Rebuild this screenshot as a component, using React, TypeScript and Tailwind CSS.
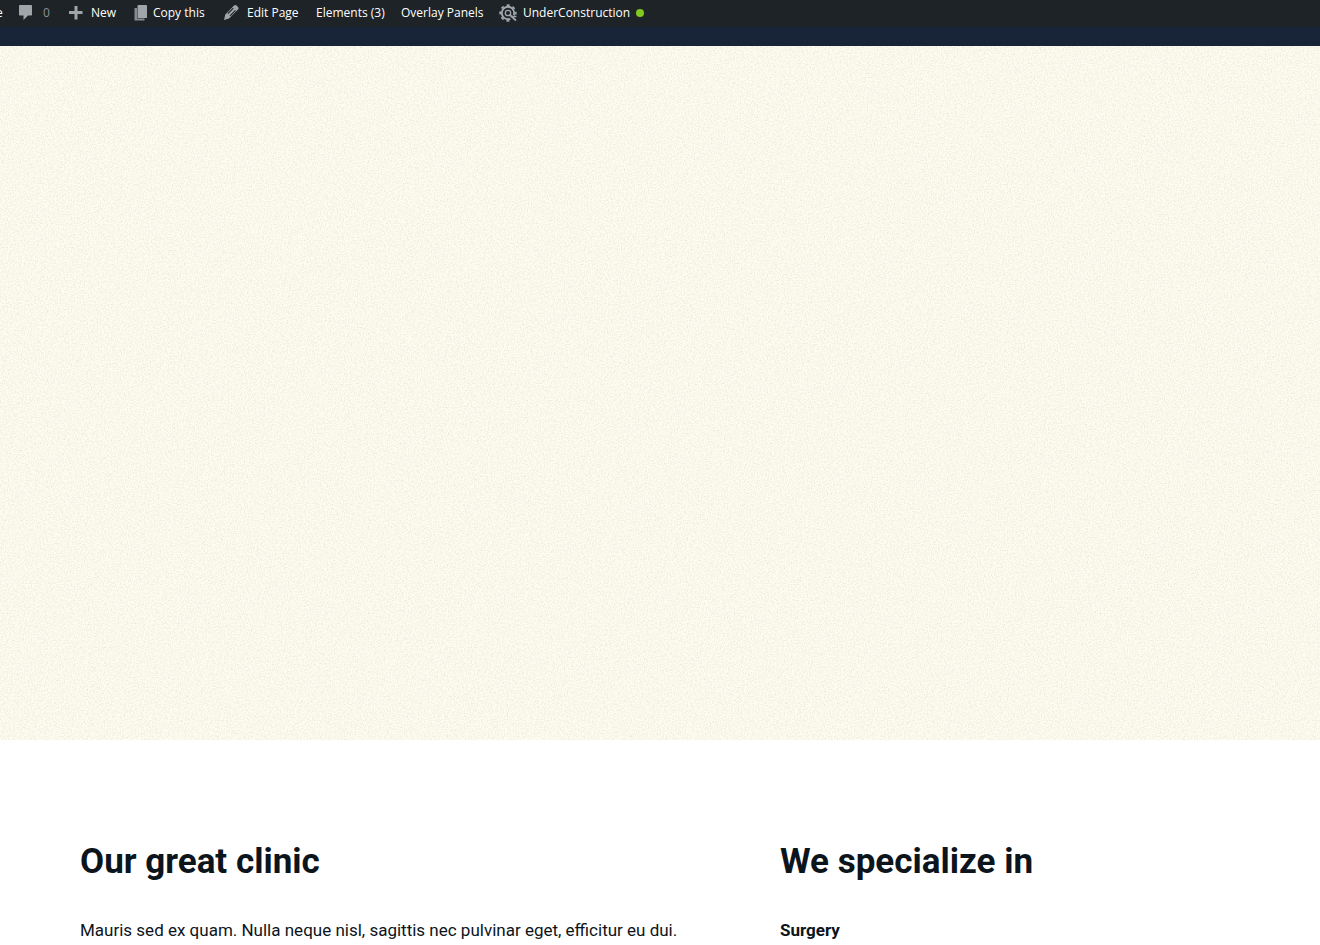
import type { ReactNode } from "react"

type BarItem = {
  label: string
  icon?: ReactNode
  className: string
  muted?: boolean
  active?: boolean
}

function CommentIcon() {
  return (
    <svg viewBox="0 0 20 20" className="size-5 fill-current" aria-hidden="true">
      <path d="M4 2h11c.6 0 1 .4 1 1v8.500c0 .6-.4 1-1 1h-3L7.500 17v-4.500H4c-.6 0-1-.4-1-1V3c0-.6.4-1 1-1z" />
    </svg>
  )
}

function PlusIcon() {
  return (
    <svg viewBox="0 0 20 20" className="size-5 fill-current" aria-hidden="true">
      <path d="M15.500 8v3H10.500v5.500H7.500V11H2V8h5.500V3h3v5z" />
    </svg>
  )
}

function CopyIcon() {
  return (
    <svg viewBox="0 0 20 20" className="size-5 fill-current" aria-hidden="true">
      <path d="M3.500 5H6v10.500h7.500V17.500h-10z" fill="#858b90" />
      <path d="M7.500 2H15a1 1 0 0 1 1 1v12H6.500V3a1 1 0 0 1 1-1z" />
    </svg>
  )
}

function PencilIcon() {
  return (
    <svg viewBox="0 0 20 20" className="size-5 fill-current" aria-hidden="true">
      <path d="M12 2.500c.8-.8 1.800-.8 2.600 0l1.400 1.400c.8.8.8 1.800 0 2.600L7 15.500l-5 1.500 1.300-5.500z" />
      <path d="M5.800 10.700l5.500-5.500M8 12.900l5.500-5.500" stroke="#1d2327" strokeWidth="1.200" fill="none" />
    </svg>
  )
}

function GearSearchIcon() {
  return (
    <svg viewBox="0 0 20 20" className="size-5 fill-none stroke-current" aria-hidden="true">
      <circle cx="10" cy="10" r="6.200" strokeWidth="1.900" />
      <circle cx="10" cy="10" r="7.800" strokeWidth="1.800" strokeDasharray="3.060 3.060" strokeDashoffset="1.530" />
      <circle cx="10" cy="10" r="2.700" strokeWidth="1.300" />
      <path d="M13.500 13.500l5 5" stroke="#1d2327" strokeWidth="5" />
      <path d="M12 12l5.500 5" strokeWidth="1.800" strokeLinecap="round" />
      <path d="M15 13.500l3.500 0" strokeWidth="1.400" />
    </svg>
  )
}

const items: BarItem[] = [
  { label: "0", icon: <CommentIcon />, className: "w-[51px] gap-[7px]", muted: true },
  { label: "New", icon: <PlusIcon />, className: "w-16 gap-1" },
  { label: "Copy this", icon: <CopyIcon />, className: "w-[91px] gap-[2px]" },
  { label: "Edit Page", icon: <PencilIcon />, className: "w-[94px] gap-[5px]" },
  { label: "Elements (3)", className: "w-[85px]" },
  { label: "Overlay Panels", className: "w-[97px]" },
  { label: "UnderConstruction", icon: <GearSearchIcon />, className: "gap-[5px]", active: true },
]

function AdminBar() {
  return (
    <nav className="flex h-[27px] items-center overflow-hidden whitespace-nowrap bg-[#1d2327] pb-px font-['Open_Sans',sans-serif] text-[12px] leading-6 text-white">
      <a href="#" className="flex w-4">
        <span className="-ml-1">e</span>
      </a>
      {items.map((item) => (
        <a key={item.label} href="#" className={`flex shrink-0 items-center ${item.className}`}>
          {item.icon && <span className="shrink-0 text-[#a0a5aa]">{item.icon}</span>}
          <span className={item.muted ? "text-[#8c9196]" : ""}>{item.label}</span>
          {item.active && <span className="ml-px size-2 shrink-0 rounded-full bg-[#82c91e]" />}
        </a>
      ))}
    </nav>
  )
}

function PaperTexture() {
  return (
    <svg className="absolute inset-0 size-full" aria-hidden="true">
      <filter id="paper" x="0" y="0" width="100%" height="100%" colorInterpolationFilters="sRGB">
        <feTurbulence type="fractalNoise" baseFrequency="0.7" numOctaves="3" seed="4" />
        <feColorMatrix values="0 0 0 0 0.500  0 0 0 0 0.500  0 0 0 0 0.480  0.320 0 0 0 -0.120" />
      </filter>
      <rect width="100%" height="100%" filter="url(#paper)" />
    </svg>
  )
}

export default function App() {
  return (
    <div className="bg-white font-[Roboto,sans-serif] text-[#0c141c]">
      <AdminBar />
      <header className="h-[19px] bg-[#182538]" />
      <main>
        <section className="relative h-[694px] bg-[#fffdf0]">
          <PaperTexture />
        </section>
        <section className="grid grid-cols-[30fr_23fr] gap-x-[100px] px-20 pt-[100px]">
          <div>
            <h2 className="text-[35px] leading-[44px] font-bold">Our great clinic</h2>
            <p className="mt-[34px] text-[17px] leading-6">
              Mauris sed ex quam. Nulla neque nisl, sagittis nec pulvinar eget, efficitur eu dui.
            </p>
          </div>
          <div>
            <h2 className="text-[35px] leading-[44px] font-bold">We specialize in</h2>
            <p className="mt-[34px] text-[17px] leading-6 font-bold">Surgery</p>
          </div>
        </section>
      </main>
    </div>
  )
}
